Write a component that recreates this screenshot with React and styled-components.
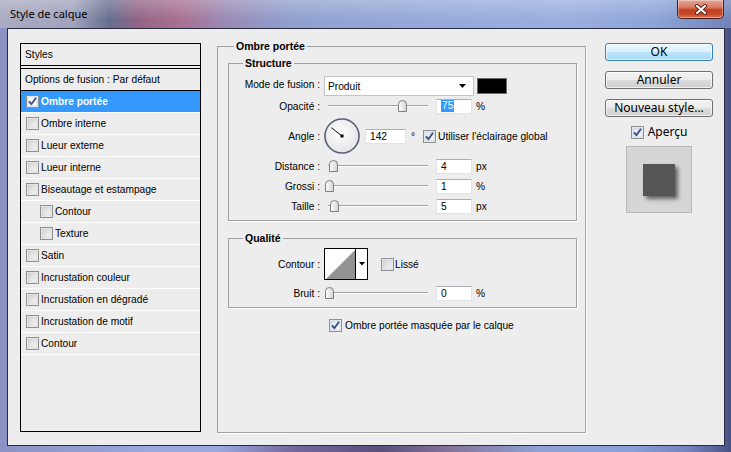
import React from 'react';
import styled, { createGlobalStyle } from 'styled-components';

const Global = createGlobalStyle`
  html, body { margin: 0; padding: 0; }
  body {
    width: 731px; height: 452px; overflow: hidden;
    font-family: "Liberation Sans", Arial, sans-serif;
  }
`;

const Window = styled.div`
  width: 731px; height: 452px; box-sizing: border-box;
  display: flex; flex-direction: column;
  background: linear-gradient(90deg, #8c92c4 0%, #9aaae0 22%, #9aa8e0 30%, #76689e 40%, #5a4e7c 52%, #86769e 62%, #8ea2d6 74%, #8aa0d8 86%, #7484c0 94%, #4a5284 100%);
`;

const TitleBar = styled.div`
  height: 28px; flex: none;
  display: flex; align-items: flex-start; justify-content: space-between;
  padding-left: 10px;
  background:
    linear-gradient(180deg, rgba(255,255,255,0.28), rgba(255,255,255,0.05) 70%),
    linear-gradient(90deg, #a6a6be 0%, #9c9eba 10%, #5e6688 15%, #8e5c80 19%, #a46a8c 25%, #9484b2 31%, #8a9ccc 40%, #90a6d8 60%, #94aade 78%, #86a0d6 90%, #6a7cb4 100%);
`;

const Title = styled.span`
  font: 11px "Noto Sans", sans-serif;
  line-height: 16px;
  margin-top: 6px;
  color: #000;
`;

const CloseButton = styled.div`
  width: 47px; height: 19px; box-sizing: border-box;
  margin-right: 7px;
  border: 1px solid #4a1e1e; border-top: none;
  border-radius: 0 0 5px 5px;
  display: flex; align-items: center; justify-content: center;
  background: linear-gradient(180deg, #e4a898 0%, #d77a66 40%, #c3401f 55%, #c8482a 80%, #dc7a52 100%);
  box-shadow: inset 0 0 0 1px rgba(255,255,255,0.35);
`;

const Body = styled.div`
  flex: 1;
  margin: 0 6px 6px 7px;
  border: 1px solid #2a2c42;
  background: #ededed;
  display: flex; align-items: flex-start;
  padding: 11px 0 0 12px;
  font-size: 10.2px; color: #000;
`;

/* ---------- left list ---------- */
const Panel = styled.div`
  width: 181px; height: 389px; box-sizing: border-box; flex: none;
  margin-top: 3px;
  border: 1px solid #000;
  display: flex; flex-direction: column;
`;

const PanelHeader = styled.div`
  height: 21px; display: flex; align-items: center;
  padding-left: 4px;
  border-bottom: 1px solid #000;
  margin-bottom: 2px;
`;

const BlendRow = styled.div`
  height: 21px; display: flex; align-items: center;
  padding-left: 4px;
  border-top: 1px solid #000;
  border-bottom: 1px solid #000;
`;

const StyleRow = styled.div`
  height: 21px; flex: none;
  display: flex; align-items: center; gap: 2px;
  padding-left: ${p => (p.$indent ? 19 : 5)}px;
  border-bottom: 1px solid #fff;
  background: ${p => (p.$selected ? '#3399ff' : 'transparent')};
  color: ${p => (p.$selected ? '#fff' : '#000')};
  font-weight: ${p => (p.$selected ? 'bold' : 'normal')};
`;

/* ---------- middle ---------- */
const Group = styled.fieldset`
  margin: ${p => p.$margin || '0'};
  min-width: 0;
  box-sizing: border-box;
  border: 1px solid #a0a0a0;
  box-shadow: 1px 1px 0 #fff;
  padding: ${p => p.$pad};
  display: flex; flex-direction: column;
  ${p => (p.$width ? `width: ${p.$width}px;` : '')}
  ${p => (p.$height ? `height: ${p.$height}px;` : '')}
`;

const Legend = styled.legend`
  font-weight: bold; font-size: 10.5px; line-height: 12px;
  padding: 0 2px;
  margin-left: ${p => p.$indent}px;
`;

const Middle = styled.div`
  margin-left: 16px; flex: none;
`;

const Row = styled.div`
  display: flex; align-items: center;
  height: ${p => p.$h || 20}px; flex: none;
`;

const Label = styled.span`
  width: 91px; flex: none; text-align: right;
  margin-right: 4px;
  ${p => (p.$lift ? 'position: relative; top: -2px;' : '')}
`;

const Select = styled.div`
  width: 150px; height: 20px; box-sizing: border-box;
  background: #fff;
  border: 1px solid #c4c4c4;
  display: flex; align-items: center; justify-content: space-between;
  padding: 1px 6px 0 3px;
`;

const Swatch = styled.div`
  width: 30px; height: 16px; box-sizing: border-box;
  margin-left: 3px;
  background: #000;
  border: 1px solid #6a6a6a;
`;

const SliderBox = styled.div`
  position: relative;
  width: 106px; height: 14px; flex: none;
  margin-left: 1px;
  &::before {
    content: '';
    position: absolute; left: 3px; right: 3px; top: 6px;
    height: 0;
    border-top: 1px solid #a3a3a3;
    border-bottom: 1px solid #fff;
  }
`;

const Thumb = styled.div`
  position: absolute; top: 1px;
  width: 9px; height: 12px;
  line-height: 0;
`;

const Field = styled.div`
  width: ${p => p.$w || 36}px; height: 15px; box-sizing: border-box; flex: none;
  margin-left: ${p => p.$ml ?? 5}px;
  background: #fff;
  border: 1px solid #e0e3ea;
  border-top-color: #abadb3;
  display: flex; align-items: center;
  padding-left: 4px;
`;

const Selected = styled.span`
  background: #3399ff; color: #fff; padding: 0 1px; line-height: 12px;
`;

const Unit = styled.span`
  margin-left: ${p => p.$ml ?? 4}px;
`;

const CheckText = styled.span`
  margin-left: ${p => p.$ml ?? 2}px;
`;

const Picker = styled.div`
  display: flex; height: 32px; box-sizing: border-box;
  border: 1px solid #000;
`;

const PickerSquare = styled.div`
  width: 30px; height: 30px; line-height: 0;
  border-right: 1px solid #000;
`;

const PickerArrow = styled.div`
  width: 11px; display: flex; align-items: center; justify-content: center;
  background: #fff;
`;

const MaskRow = styled.div`
  display: flex; align-items: center;
  height: 14px; margin-top: 10px; padding-left: 101px;
`;

/* ---------- right ---------- */
const Side = styled.div`
  margin: 3px 0 0 19px; width: 108px; flex: none;
  display: flex; flex-direction: column; align-items: center;
`;

const Button = styled.div`
  width: 108px; height: 18px; box-sizing: border-box;
  margin-bottom: 10px;
  border: 1px solid ${p => (p.$primary ? '#3c7fb1' : '#707070')};
  border-radius: 3px;
  display: flex; align-items: center; justify-content: center;
  font: 12px "Noto Sans", sans-serif; line-height: 14px; color: #000;
  background: ${p =>
    p.$primary
      ? 'linear-gradient(180deg, #eaf6fd 0%, #d9f0fc 50%, #bee6fd 50%, #a7d9f5 100%)'
      : 'linear-gradient(180deg, #f2f2f2 0%, #ebebeb 50%, #dddddd 50%, #cfcfcf 100%)'};
  box-shadow: inset 0 0 0 1px rgba(255,255,255,0.7);
`;

const Preview = styled.label`
  display: flex; align-items: center; gap: 4px;
  height: 14px; margin-top: -2px;
  font: 12px "Noto Sans", sans-serif; line-height: 14px;
`;

const PreviewBox = styled.div`
  width: 66px; height: 67px; box-sizing: border-box;
  margin-top: 7px;
  background: #d6d6d6;
  border: 1px solid #b8b8b8;
  display: flex; align-items: center; justify-content: center;
`;

const PreviewSquare = styled.div`
  width: 32px; height: 32px;
  background: #555555;
  box-shadow: 3px 3px 4px rgba(0,0,0,0.55);
`;

/* ---------- drawings ---------- */
function Checkbox({ checked, light }) {
  return (
    <svg width="13" height="13" viewBox="0 0 13 13" style={{ flex: 'none', display: 'block' }}>
      <defs>
        <linearGradient id="cbg" x1="0" y1="0" x2="1" y2="1">
          <stop offset="0" stopColor="#d2d2d2" />
          <stop offset="1" stopColor="#f7f7f7" />
        </linearGradient>
        <linearGradient id="cbc" x1="0" y1="0" x2="1" y2="1">
          <stop offset="0" stopColor="#dde4ef" />
          <stop offset="1" stopColor="#f9fbff" />
        </linearGradient>
      </defs>
      <rect x="0.5" y="0.5" width="12" height="12" fill="#f4f4f4" stroke="#8e8f8f" />
      <rect x="2" y="2" width="9" height="9" fill={light ? '#fff' : checked ? 'url(#cbc)' : 'url(#cbg)'} stroke={checked ? '#b8c2d6' : '#c8c8c8'} strokeWidth="0.6" />
      {checked && (
        <path d="M3 6.3 L5.4 9.2 L10 2.8" fill="none" stroke="#3a4f85" strokeWidth="1.9" strokeLinejoin="round" />
      )}
    </svg>
  );
}

function SliderThumb() {
  return (
    <svg width="9" height="12" viewBox="0 0 9 12">
      <defs>
        <linearGradient id="thg" x1="0" y1="0" x2="1" y2="0">
          <stop offset="0" stopColor="#ffffff" />
          <stop offset="1" stopColor="#d4d4d4" />
        </linearGradient>
      </defs>
      <path d="M0.5 11.5 V4.2 Q0.5 0.5 4.5 0.5 Q8.5 0.5 8.5 4.2 V11.5 Z" fill="url(#thg)" stroke="#7e7e7e" />
    </svg>
  );
}

function Slider({ value, max = 100 }) {
  const left = Math.round((value / max) * 97);
  return (
    <SliderBox>
      <Thumb style={{ left }}>
        <SliderThumb />
      </Thumb>
    </SliderBox>
  );
}

function Dial({ angle }) {
  const r = (angle * Math.PI) / 180;
  const x = 18 + 13.5 * Math.cos(r);
  const y = 18 - 13.5 * Math.sin(r);
  return (
    <svg width="36" height="38" viewBox="0 0 36 38" style={{ flex: 'none', display: 'block' }}>
      <defs>
        <radialGradient id="dialg" cx="0.45" cy="0.4" r="0.6">
          <stop offset="0" stopColor="#ffffff" />
          <stop offset="1" stopColor="#e4e4e4" />
        </radialGradient>
      </defs>
      <circle cx="18" cy="19" r="17" fill="url(#dialg)" stroke="#56607e" strokeWidth="1.6" />
      <line x1="18" y1="19" x2={x} y2={y + 1} stroke="#000" strokeWidth="1" />
      <rect x="16.5" y="17.5" width="3" height="3" fill="#000" />
    </svg>
  );
}

function SelectArrow() {
  return (
    <svg width="8" height="5" viewBox="0 0 8 5" style={{ display: 'block' }}>
      <path d="M0 0 H7 L3.5 4 Z" fill="#000" />
    </svg>
  );
}

const styleItems = [
  { name: 'Ombre portée', checked: true, selected: true },
  { name: 'Ombre interne' },
  { name: 'Lueur externe' },
  { name: 'Lueur interne' },
  { name: 'Biseautage et estampage' },
  { name: 'Contour', indent: true },
  { name: 'Texture', indent: true },
  { name: 'Satin' },
  { name: 'Incrustation couleur' },
  { name: 'Incrustation en dégradé' },
  { name: 'Incrustation de motif' },
  { name: 'Contour' },
];

export default function App() {
  return (
    <>
      <Global />
      <Window>
        <TitleBar>
          <Title>Style de calque</Title>
          <CloseButton>
            <svg width="14" height="11" viewBox="0 0 14 11">
              <path d="M3 2 L11 9 M11 2 L3 9" stroke="#5a1a10" strokeWidth="4" strokeLinecap="round" />
              <path d="M3 2 L11 9 M11 2 L3 9" stroke="#fff" strokeWidth="2.2" strokeLinecap="round" />
            </svg>
          </CloseButton>
        </TitleBar>
        <Body>
          <Panel>
            <PanelHeader>Styles</PanelHeader>
            <BlendRow>Options de fusion : Par défaut</BlendRow>
            {styleItems.map((it, i) => (
              <StyleRow key={i} $indent={it.indent} $selected={it.selected}>
                <Checkbox checked={it.checked} light={it.selected} />
                <span>{it.name}</span>
              </StyleRow>
            ))}
          </Panel>

          <Middle>
            <Group $pad="5px 8px 0 10px" $width={369} $height={393}>
              <Legend $indent={6}>Ombre portée</Legend>

              <Group $pad="7px 0 4px 0">
                <Legend $indent={14}>Structure</Legend>
                <Row>
                  <Label $lift>Mode de fusion :</Label>
                  <Select>
                    <span>Produit</span>
                    <SelectArrow />
                  </Select>
                  <Swatch />
                </Row>
                <Row>
                  <Label>Opacité :</Label>
                  <Slider value={75} />
                  <Field><Selected>75</Selected></Field>
                  <Unit>%</Unit>
                </Row>
                <Row $h={40}>
                  <Label>Angle :</Label>
                  <Dial angle={142} />
                  <Field $w={41} $ml={5}>142</Field>
                  <Unit $ml={5}>°</Unit>
                  <Unit $ml={8}><Checkbox checked /></Unit>
                  <CheckText>Utiliser l'éclairage global</CheckText>
                </Row>
                <Row>
                  <Label>Distance :</Label>
                  <Slider value={4} />
                  <Field>4</Field>
                  <Unit>px</Unit>
                </Row>
                <Row>
                  <Label>Grossi :</Label>
                  <Slider value={0} />
                  <Field>1</Field>
                  <Unit>%</Unit>
                </Row>
                <Row>
                  <Label>Taille :</Label>
                  <Slider value={5} />
                  <Field>5</Field>
                  <Unit>px</Unit>
                </Row>
              </Group>

              <Group $pad="4px 0 4px 0" $margin="11px 0 0 0">
                <Legend $indent={14}>Qualité</Legend>
                <Row $h={32}>
                  <Label>Contour :</Label>
                  <Picker>
                    <PickerSquare>
                      <svg width="30" height="30" viewBox="0 0 30 30">
                        <rect width="30" height="30" fill="#fff" />
                        <polygon points="1,30 30,1 30,30" fill="#939393" />
                      </svg>
                    </PickerSquare>
                    <PickerArrow>
                      <svg width="6" height="4" viewBox="0 0 6 4"><path d="M0 0 H6 L3 3.5 Z" fill="#000" /></svg>
                    </PickerArrow>
                  </Picker>
                  <Unit $ml={13}><Checkbox /></Unit>
                  <CheckText $ml={1}>Lissé</CheckText>
                </Row>
                <Row style={{ marginTop: 3 }}>
                  <Label>Bruit :</Label>
                  <Slider value={0} />
                  <Field>0</Field>
                  <Unit>%</Unit>
                </Row>
              </Group>

              <MaskRow>
                <Checkbox checked />
                <CheckText $ml={3}>Ombre portée masquée par le calque</CheckText>
              </MaskRow>
            </Group>
          </Middle>

          <Side>
            <Button $primary>OK</Button>
            <Button>Annuler</Button>
            <Button>Nouveau style...</Button>
            <Preview>
              <Checkbox checked />
              <span>Aperçu</span>
            </Preview>
            <PreviewBox>
              <PreviewSquare />
            </PreviewBox>
          </Side>
        </Body>
      </Window>
    </>
  );
}
